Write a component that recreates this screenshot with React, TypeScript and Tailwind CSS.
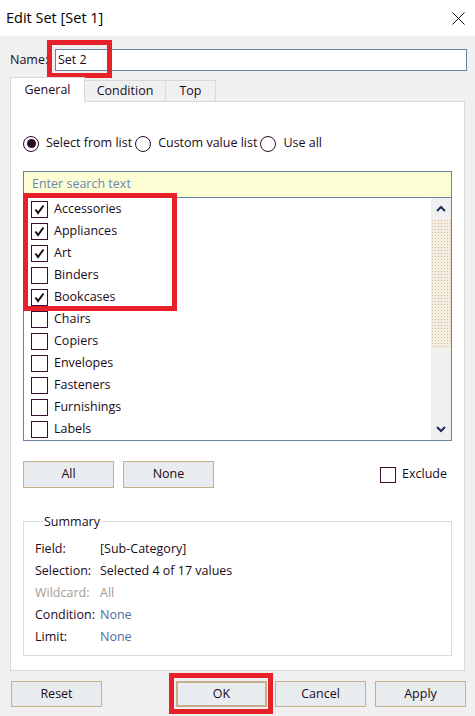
const ink = "text-[#1c0a1a]";

function Box({ checked, size = "h-[17px] w-[17px]" }: { checked?: boolean; size?: string }) {
  return (
    <span className={`flex shrink-0 items-center justify-center border border-[#3b0e30] bg-white ${size}`}>
      {checked && (
        <svg width="15" height="15" viewBox="0 0 15 15">
          <path d="M3.5 7.5 L6 11 L11.5 3.5" stroke="#1a0816" strokeWidth="2" fill="none" />
        </svg>
      )}
    </span>
  );
}

function Radio({ on, label }: { on?: boolean; label: string }) {
  return (
    <div className="flex items-center gap-[7px]">
      <span className="flex h-[16px] w-[16px] items-center justify-center rounded-full border border-[#2c0b24] bg-white">
        {on && <span className="h-[9px] w-[9px] rounded-full bg-[#2a0a22]" />}
      </span>
      <span>{label}</span>
    </div>
  );
}

function Btn({ label, className = "" }: { label: string; className?: string }) {
  return (
    <div
      className={`flex h-[26px] w-[91px] items-center justify-center border border-[#c9ae8c] bg-[#dfe3e6] bg-[radial-gradient(circle,#f4f6f7_0.6px,transparent_0.8px)] bg-[length:2px_2px] ${className}`}
    >
      {label}
    </div>
  );
}

const items = [
  ["Accessories", true],
  ["Appliances", true],
  ["Art", true],
  ["Binders", false],
  ["Bookcases", true],
  ["Chairs", false],
  ["Copiers", false],
  ["Envelopes", false],
  ["Fasteners", false],
  ["Furnishings", false],
  ["Labels", false],
] as const;

const summary = [
  { k: "Field:", v: "[Sub-Category]", kc: ink, vc: ink },
  { k: "Selection:", v: "Selected 4 of 17 values", kc: ink, vc: ink },
  { k: "Wildcard:", v: "All", kc: "text-[#a59d93]", vc: "text-[#a59d93]" },
  { k: "Condition:", v: "None", kc: ink, vc: "text-[#4f6b9c]" },
  { k: "Limit:", v: "None", kc: ink, vc: "text-[#4f6b9c]" },
];

export default function App() {
  return (
    <div className={`relative h-[716px] w-[475px] overflow-hidden bg-[#f0f0f0] font-['Open_Sans','Noto_Sans',sans-serif] text-[12.5px] ${ink}`}>
      {/* title bar */}
      <div className="flex h-[36px] items-center justify-between bg-white pl-[6px] pr-[10px]">
        <span className="text-[14.5px] text-black">Edit Set [Set 1]</span>
        <svg width="13" height="13" viewBox="0 0 13 13">
          <path d="M0.5 0.5 L12.5 12.5 M12.5 0.5 L0.5 12.5" stroke="#1a0a16" strokeWidth="1" />
        </svg>
      </div>

      {/* name */}
      <div className="mt-[13px] flex h-[22px] items-center pl-[10px] pr-[8px]">
        <span className="w-[45px]">Name:</span>
        <div className="flex h-[22px] flex-1 items-center border border-[#6c81a6] bg-white pl-[2px]">Set 2</div>
      </div>

      {/* tabs */}
      <div className="mt-[6px] flex h-[24px] items-end pl-[10px]">
        <div className="relative z-10 -mb-px flex h-[25px] w-[75px] items-center justify-center border-x border-t border-[#d9d9d9] bg-white">
          General
        </div>
        <div className="flex h-[21px] w-[81px] items-center justify-center border-r border-t border-[#d9d9d9] bg-[#f0f0f0]">
          Condition
        </div>
        <div className="flex h-[21px] w-[50px] items-center justify-center border-r border-t border-[#d9d9d9] bg-[#f0f0f0]">
          Top
        </div>
      </div>

      {/* panel */}
      <div className="ml-[10px] w-[455px] border border-[#d9d9d9] bg-white px-[12px] pt-[33px] pb-[14px]">
        <div className="flex h-[17px] items-center gap-[3px]">
          <Radio on label="Select from list" />
          <Radio label="Custom value list" />
          <Radio label="Use all" />
        </div>

        <div className="mt-[19px] flex h-[27px] items-center border border-[#6c81a6] bg-[#fdfdd3] pl-[8px] text-[#6a86b6]">
          Enter search text
        </div>
        <div className="flex h-[243px] border-x border-b border-[#6c81a6]">
          <div className="flex-1 pl-[7px]">
            {items.map(([name, on]) => (
              <div key={name} className="flex h-[22px] items-center gap-[6px]">
                <Box checked={on} />
                <span>{name}</span>
              </div>
            ))}
          </div>
          <div className="flex w-[20px] flex-col bg-[#f0f0f0]">
            <div className="flex h-[21px] items-center justify-center">
              <svg width="10" height="7" viewBox="0 0 10 7">
                <path d="M1 6 L5 2 L9 6" stroke="#1f2a5c" strokeWidth="2" fill="none" />
              </svg>
            </div>
            <div className="h-[130px] bg-[#f4ede3] bg-[radial-gradient(circle,#d8b98f_0.8px,transparent_1px)] bg-[length:3px_3px]" />
            <div className="flex-1" />
            <div className="flex h-[21px] items-center justify-center">
              <svg width="10" height="7" viewBox="0 0 10 7">
                <path d="M1 1 L5 5 L9 1" stroke="#1f2a5c" strokeWidth="2" fill="none" />
              </svg>
            </div>
          </div>
        </div>

        <div className="mt-[20px] flex items-center justify-between">
          <div className="flex gap-[9px]">
            <Btn label="All" className="h-[27px]" />
            <Btn label="None" className="h-[27px]" />
          </div>
          <div className="mr-[5px] flex items-center gap-[6px]">
            <Box size="h-[16px] w-[16px]" />
            <span>Exclude</span>
          </div>
        </div>

        <fieldset className="mt-[25px] border border-[#d9dcde] px-[11px] pb-[7px]">
          <legend className="ml-[8px] px-[1px] leading-[17px]">Summary</legend>
          <div className="mt-[8px] flex flex-col">
            {summary.map((r) => (
              <div key={r.k} className="flex h-[22px] items-center">
                <span className={`w-[65px] ${r.kc}`}>{r.k}</span>
                <span className={r.vc}>{r.v}</span>
              </div>
            ))}
          </div>
        </fieldset>
      </div>

      {/* bottom buttons */}
      <div className="mt-[10px] flex items-center justify-between pl-[11px] pr-[9px]">
        <Btn label="Reset" />
        <div className="flex items-center">
          <Btn label="OK" className="border-2 border-[#6a82a8]" />
          <Btn label="Cancel" className="ml-[8px]" />
          <Btn label="Apply" className="ml-[9px]" />
        </div>
      </div>

      {/* red highlight marks */}
      <div className="pointer-events-none absolute left-[47px] top-[40px] h-[38px] w-[65px] border-[5px] border-[#e8202a]" />
      <div className="pointer-events-none absolute left-[23px] top-[193px] h-[118px] w-[154px] border-[5px] border-[#e8202a]" />
      <div className="pointer-events-none absolute left-[169px] top-[673px] h-[41px] w-[104px] border-[5px] border-[#e8202a]" />
    </div>
  );
}
